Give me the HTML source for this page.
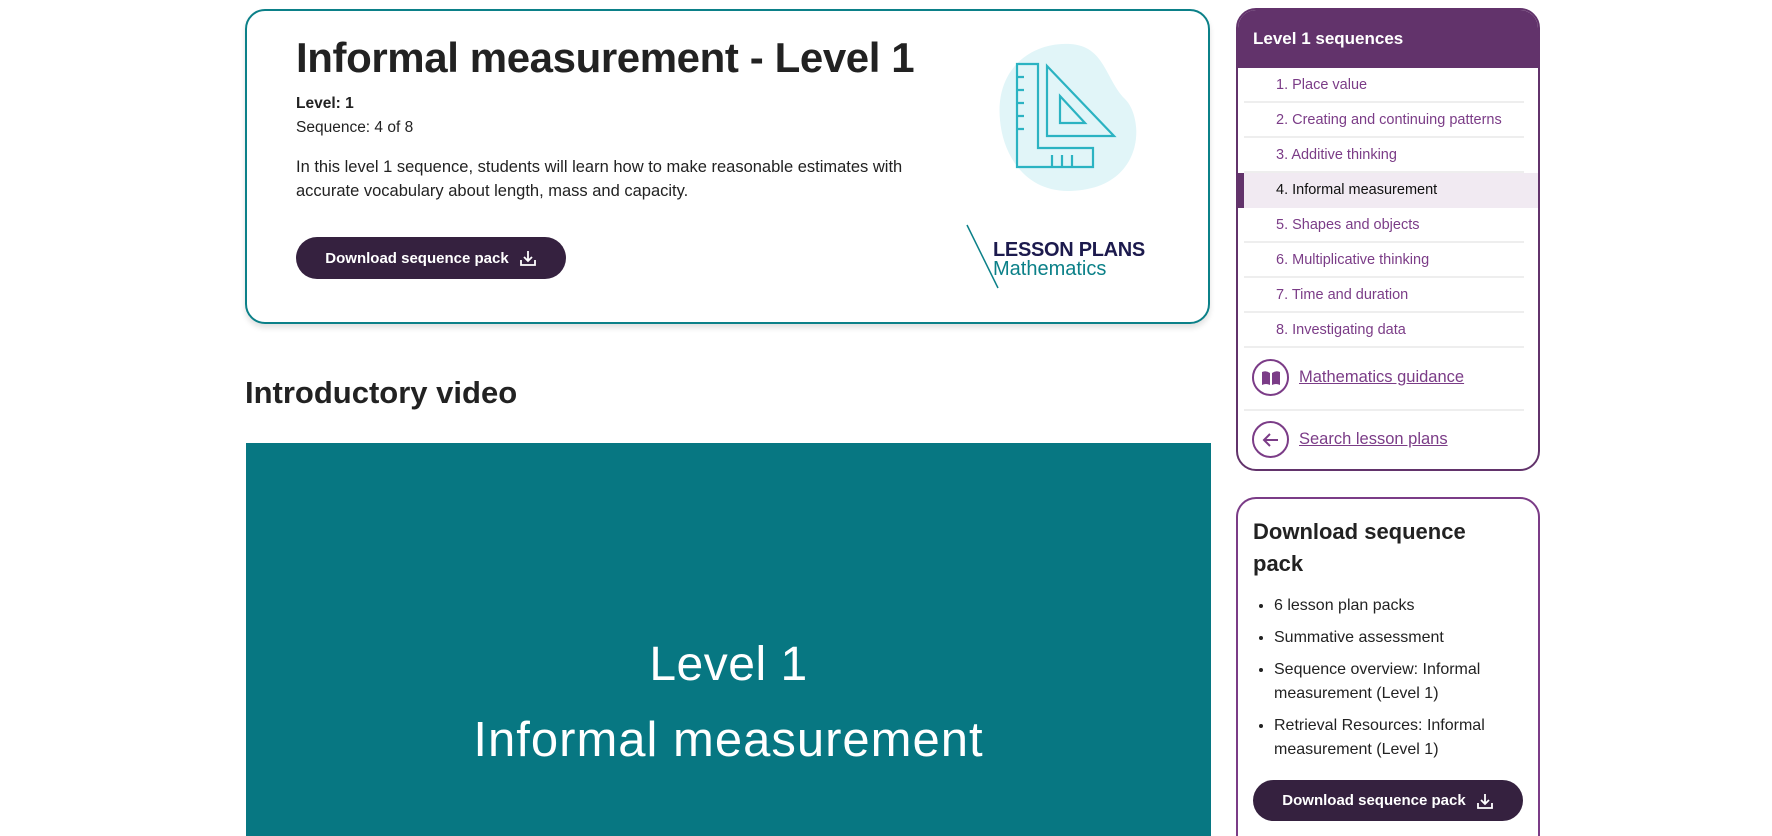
<!DOCTYPE html>
<html style="height:836px;overflow:hidden"><head><meta charset="utf-8"><style>
*{box-sizing:border-box;margin:0;padding:0}
body{width:1772px;height:836px;overflow:hidden;background:#fff;font-family:"Liberation Sans",sans-serif;color:#222}
#wrap{position:relative;width:1772px;height:836px;overflow:hidden}
.abs{position:absolute}
.card{left:245px;top:9px;width:965px;height:315px;border:2.5px solid #0b8088;border-radius:20px;box-shadow:0 4px 6px rgba(0,0,0,.12)}
.btn{background:#35213f;color:#fff;font-weight:bold;font-size:15px;border-radius:21px;display:flex;align-items:center;justify-content:center;gap:10px}
.side{left:1236px;top:8px;width:304px;height:463px;border:2px solid #62336b;border-radius:20px;overflow:hidden}
.hd{height:58px;background:#62336b;color:#fff;font-weight:bold;font-size:17px;padding:19px 0 0 15px}
.it{position:absolute;left:6px;width:280px;height:35px;border-bottom:2px solid #eee;color:#7b3c87;font-size:14.5px;padding:9px 0 0 32px}
.it.act{background:#f1eaf2;color:#111;left:0;width:300px;border-left:6px solid #62336b;padding-left:32px;border-bottom:none}
.lk{position:absolute;left:14px;display:flex;align-items:center;gap:10px;color:#7b3c87;font-size:16.5px;text-decoration:underline}
.circ{width:37px;height:37px;border:2px solid #7b3c87;border-radius:50%;display:flex;align-items:center;justify-content:center}
.dl{left:1236px;top:497px;width:304px;height:360px;border:2px solid #7b3c87;border-radius:20px}
.dl li{font-size:16px;line-height:24px;margin-bottom:8px}
</style></head><body><div id="wrap">
<div class="abs card"></div>
<div class="abs" style="left:296px;top:34px;font-size:42px;font-weight:bold;letter-spacing:-0.4px">Informal measurement - Level 1</div>
<div class="abs" style="left:296px;top:95px;font-size:15.5px;font-weight:bold">Level: 1</div>
<div class="abs" style="left:296px;top:119px;font-size:15.5px">Sequence: 4 of 8</div>
<div class="abs" style="left:296px;top:155px;font-size:16.5px;line-height:24px;width:660px">In this level 1 sequence, students will learn how to make reasonable estimates with accurate vocabulary about length, mass and capacity.</div>
<div class="abs btn" style="left:296px;top:237px;width:270px;height:42px">Download sequence pack <svg width="18" height="18" viewBox="0 0 18 18" fill="none" stroke="#fff" stroke-width="1.8"><path d="M9 2v10M5 8l4 4 4-4M2 11v5h14v-5"/></svg></div>
<svg class="abs" style="left:990px;top:40px" width="160" height="160" viewBox="0 0 160 160">
<path d="M10 80C5 30 40 2 80 4c35 2 35 35 55 55s20 90-55 92C35 152 13 115 10 80z" fill="#e1f5f8"/>
<g fill="none" stroke="#2bb3c2" stroke-width="2.2"><path d="M27 24h21v84h55v19H27z"/><path d="M57 26l67 70H57z"/><path d="M70 56l25 27H70z"/><path d="M27 37h7M27 50h7M27 63h7M27 76h7M27 89h7M62 115v12M72 115v12M82 115v12"/></g></svg>
<svg class="abs" style="left:966px;top:224px" width="34" height="66"><line x1="1" y1="1" x2="32" y2="64" stroke="#0b8088" stroke-width="1.5"/></svg>
<div class="abs" style="left:993px;top:239px;font-size:20px;font-weight:bold;color:#1c1a4d;letter-spacing:-0.3px">LESSON PLANS</div>
<div class="abs" style="left:993px;top:258px;font-size:20px;color:#0b8088">Mathematics</div>
<div class="abs" style="left:245px;top:375px;font-size:31px;font-weight:bold">Introductory video</div>
<div class="abs" style="left:246px;top:443px;width:965px;height:400px;background:#077782;color:#fff;text-align:center">
<div style="position:absolute;top:194px;width:100%;font-size:48px;letter-spacing:0.5px">Level 1</div>
<div style="position:absolute;top:269px;width:100%;font-size:49px;letter-spacing:1px">Informal measurement</div></div>
<div class="abs side"><div class="hd">Level 1 sequences</div>
<div class="it" style="top:58px">1. Place value</div>
<div class="it" style="top:93px">2. Creating and continuing patterns</div>
<div class="it" style="top:128px">3. Additive thinking</div>
<div class="it act" style="top:163px;height:35px">4. Informal measurement</div>
<div class="it" style="top:198px">5. Shapes and objects</div>
<div class="it" style="top:233px">6. Multiplicative thinking</div>
<div class="it" style="top:268px">7. Time and duration</div>
<div class="it" style="top:303px">8. Investigating data</div>
<div class="lk" style="top:349px"><div class="circ"><svg width="20" height="16"><path d="M1 2q4-2 8 1v12q-4-2-8 0zM19 2q-4-2-8 1v12q4-2 8 0z" fill="#7b3c87"/></svg></div>Mathematics guidance</div>
<div style="position:absolute;left:6px;top:399px;width:280px;border-top:2px solid #eee"></div>
<div class="lk" style="top:411px"><div class="circ"><svg width="20" height="20" fill="none" stroke="#7b3c87" stroke-width="2"><path d="M17 10H3M9 4l-6 6 6 6"/></svg></div>Search lesson plans</div>
</div>
<div class="abs dl">
<div style="position:absolute;left:15px;top:17px;font-size:22px;font-weight:bold;line-height:32px;width:240px">Download sequence pack</div>
<ul style="position:absolute;left:36px;top:95px;width:250px">
<li>6 lesson plan packs</li><li>Summative assessment</li><li>Sequence overview: Informal measurement (Level 1)</li><li>Retrieval Resources: Informal measurement (Level 1)</li></ul>
<div class="btn" style="position:absolute;left:15px;top:281px;width:270px;height:41px">Download sequence pack <svg width="18" height="18" viewBox="0 0 18 18" fill="none" stroke="#fff" stroke-width="1.8"><path d="M9 2v10M5 8l4 4 4-4M2 11v5h14v-5"/></svg></div>
</div>
</div></body></html>
